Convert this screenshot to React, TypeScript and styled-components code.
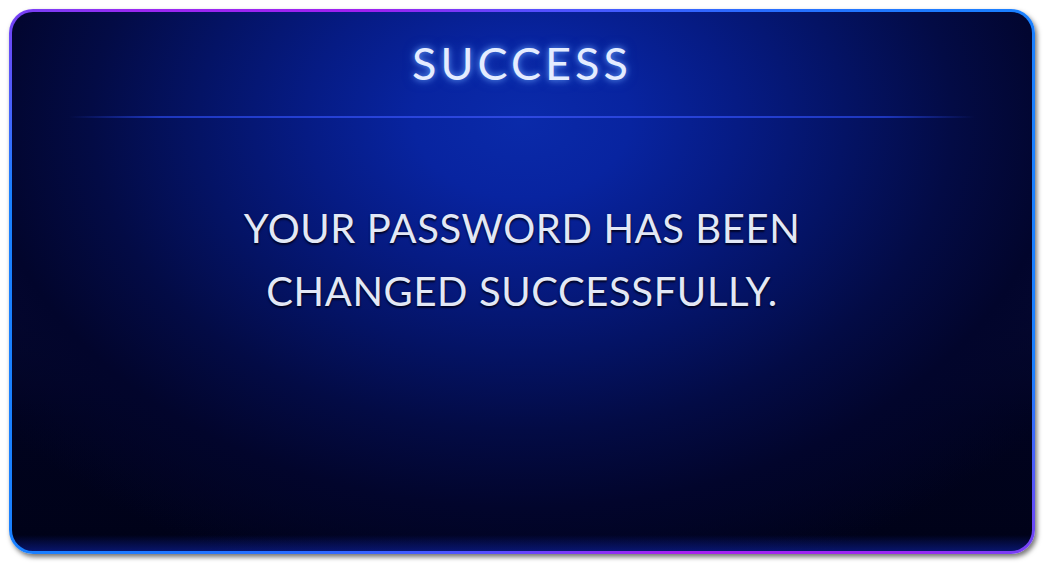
import React from "react";
import styled, { createGlobalStyle } from "styled-components";

const Global = createGlobalStyle`
  html, body { margin: 0; padding: 0; background: #ffffff; }
  body { font-family: Lato, "Noto Sans", sans-serif; }
`;

const Page = styled.div`
  width: 1044px;
  height: 566px;
  padding: 9px 9px 12px 9px;
  box-sizing: border-box;
  display: flex;
`;

const Frame = styled.div`
  flex: 1;
  padding: 3px;
  border-radius: 24px;
  background: conic-gradient(
    from 0deg,
    #5a4cff 0deg,
    #2a6cff 40deg,
    #1a80ff 62deg,
    #1a80ff 100deg,
    #9a28f2 125deg,
    #a820f0 150deg,
    #5a4cff 185deg,
    #2a6cff 220deg,
    #1a80ff 242deg,
    #1a80ff 280deg,
    #9a28f2 305deg,
    #a020f0 330deg,
    #5a4cff 360deg
  );
  box-shadow: 2px 3px 5px rgba(0, 0, 0, 0.55);
  display: flex;
`;

const Panel = styled.div`
  flex: 1;
  border-radius: 21px;
  overflow: hidden;
  display: flex;
  flex-direction: column;
  align-items: center;
  background:
    linear-gradient(to top, rgba(16, 40, 190, 0.5) 0px, rgba(16, 40, 190, 0) 16px),
    radial-gradient(ellipse 66% 90% at 50% 20%, #0a2aaa 0%, #0824a0 16%, #061b84 32%, #041365 48%, #030b45 64%, #02052c 80%, rgba(1, 3, 28, 0) 100%),
    linear-gradient(to bottom, #171b47 0%, #0c1040 35%, #01031f 75%, #000218 100%);
`;

const Title = styled.h1`
  margin: 29px 0 0 0;
  font-family: Lato, "Noto Sans", sans-serif;
  font-weight: 400;
  font-size: 45px;
  line-height: 45px;
  letter-spacing: 4px;
  color: #e4ecff;
  text-shadow: 0 0 6px rgba(110, 170, 255, 0.85), 0 0 12px rgba(80, 140, 255, 0.5);
`;

const Divider = styled.div`
  margin-top: 30px;
  width: 906px;
  height: 2px;
  background: linear-gradient(
    to right,
    rgba(40, 70, 230, 0) 0%,
    rgba(40, 70, 230, 0.7) 10%,
    #2e48e0 50%,
    rgba(40, 70, 230, 0.7) 90%,
    rgba(40, 70, 230, 0) 100%
  );
`;

const Message = styled.p`
  margin: 79px 0 0 0;
  text-align: center;
  font-family: Lato, "Noto Sans", sans-serif;
  font-weight: 400;
  font-size: 40px;
  line-height: 63px;
  letter-spacing: 0.6px;
  color: #e2e8f6;
  text-shadow: 0 2px 2px rgba(0, 0, 25, 0.85), 0 0 1px rgba(0, 0, 40, 0.6);
`;

export default function App() {
  return (
    <>
      <Global />
      <Page>
        <Frame>
          <Panel>
            <Title>SUCCESS</Title>
            <Divider />
            <Message>
              YOUR PASSWORD HAS BEEN
              <br />
              CHANGED SUCCESSFULLY.
            </Message>
          </Panel>
        </Frame>
      </Page>
    </>
  );
}
